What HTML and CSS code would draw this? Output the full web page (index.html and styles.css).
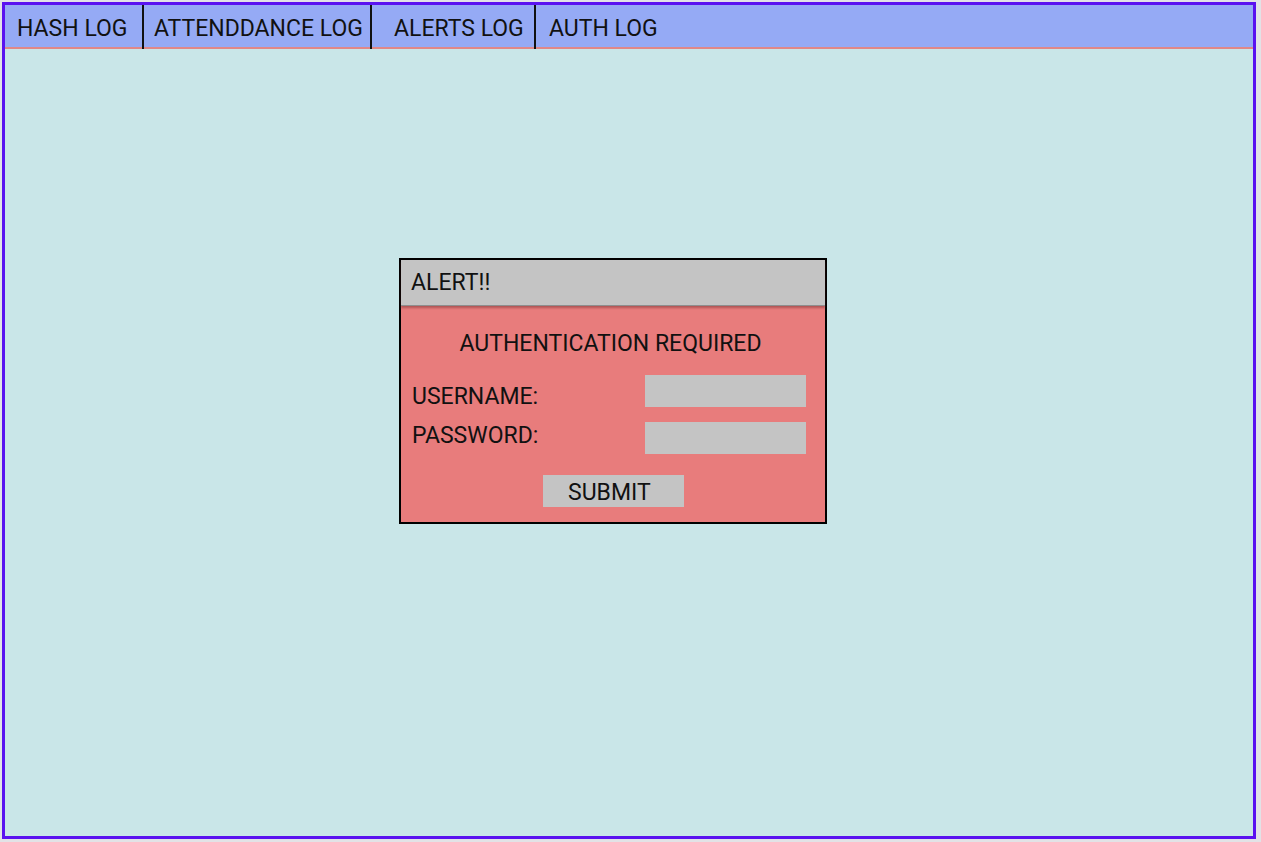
FILE: index.html
```html
<!DOCTYPE html>
<html>
<head>
<meta charset="utf-8">
<link rel="stylesheet" href="styles.css">
</head>
<body>
<div class="frame">
  <nav class="nav">
    <div class="tab tab-hash">HASH LOG</div>
    <div class="tab tab-att">ATTENDDANCE LOG</div>
    <div class="tab tab-alerts">ALERTS LOG</div>
    <div class="tab tab-auth">AUTH LOG</div>
  </nav>
  <main class="content">
    <div class="modal">
      <div class="modal-head">ALERT!!</div>
      <div class="modal-body">
        <div class="modal-title">AUTHENTICATION REQUIRED</div>
        <div class="row row-user">
          <span class="label">USERNAME:</span>
          <span class="input"></span>
        </div>
        <div class="row row-pass">
          <span class="label">PASSWORD:</span>
          <span class="input"></span>
        </div>
        <div class="actions">
          <span class="submit">SUBMIT</span>
        </div>
      </div>
    </div>
  </main>
</div>
</body>
</html>
```
FILE: styles.css
```css
html, body {
  margin: 0;
  padding: 0;
}
body {
  background: #e2e2e6;
  font-family: Roboto, "Liberation Sans", sans-serif;
  color: #111;
  padding: 2px 5px 3px 2px;
  width: 1261px;
  height: 842px;
  box-sizing: border-box;
}
.frame {
  border: 3px solid #5a12f0;
  height: 837px;
  box-sizing: border-box;
  display: flex;
  flex-direction: column;
  background: #c9e6e8;
}
.nav {
  display: flex;
  height: 44px;
  box-sizing: border-box;
  background: #95aaf5;
  border-bottom: 2px solid #e08888;
}
.tab {
  font-size: 23px;
  line-height: 44px;
  height: 44px;
  padding-top: 2px;
  box-sizing: border-box;
  border-right: 2px solid #111;
  white-space: nowrap;
}
.tab-hash { width: 139px; padding-left: 12px; }
.tab-att { width: 228px; padding-left: 10px; }
.tab-alerts { width: 164px; padding-left: 22px; }
.tab-auth { border-right: none; padding-left: 13px; }
.content {
  flex: 1;
  display: flex;
  justify-content: flex-start;
  align-items: flex-start;
  padding: 209px 0 0 394px;
}
.modal {
  width: 428px;
  height: 266px;
  box-sizing: border-box;
  border: 2px solid #000;
  display: flex;
  flex-direction: column;
  background: #e87c7c;
}
.modal-head {
  height: 46px;
  box-sizing: border-box;
  background: #c4c4c4;
  border-bottom: 1px solid #8e8e8e;
  box-shadow: 0 2px 2px rgba(110, 40, 40, 0.45);
  padding: 3px 0 0 10px;
  font-size: 23px;
  line-height: 40px;
  position: relative;
}
.modal-body {
  flex: 1;
  padding: 0 19px 0 10px;
  font-size: 23px;
}
.modal-title {
  text-align: center;
  margin-top: 26px;
  height: 24px;
  line-height: 24px;
  padding-left: 4px;
  white-space: nowrap;
}
.row {
  display: flex;
  justify-content: space-between;
  align-items: flex-start;
  height: 32px;
}
.row-user { margin-top: 19px; }
.row-pass { margin-top: 15px; }
.label {
  line-height: 24px;
  margin-left: 1px;
}
.row-user .label { margin-top: 10px; }
.row-pass .label { margin-top: 2px; }
.input {
  width: 161px;
  height: 32px;
  background: #c4c4c4;
}
.actions {
  display: flex;
  justify-content: center;
  margin-top: 21px;
  padding-left: 10px;
}
.submit {
  width: 141px;
  height: 32px;
  box-sizing: border-box;
  background: #c4c4c4;
  padding-left: 25px;
  padding-top: 1px;
  line-height: 33px;
}
```
